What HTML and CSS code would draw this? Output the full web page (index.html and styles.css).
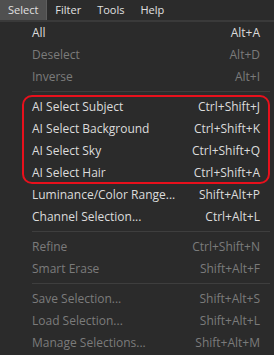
FILE: index.html
```html
<!DOCTYPE html>
<html lang="en">
<head>
  <meta charset="UTF-8" />
  <title>Select Menu</title>
  <link rel="stylesheet" href="styles.css">
</head>
<body>

  <!-- Menu bar -->
  <nav class="menubar">
    <a class="active">Select</a>
    <a>Filter</a>
    <a>Tools</a>
    <a>Help</a>
  </nav>

  <!-- Dropdown -->
  <div class="dropdown">
    <div class="item"><span>All</span><span>Alt+A</span></div>
    <div class="item disabled"><span>Deselect</span><span>Alt+D</span></div>
    <div class="item disabled"><span>Inverse</span><span>Alt+I</span></div>
    <div class="sep"></div>

    <div class="group highlight">
      <div class="item"><span>AI Select Subject</span><span>Ctrl+Shift+J</span></div>
      <div class="item"><span>AI Select Background</span><span>Ctrl+Shift+K</span></div>
      <div class="item"><span>AI Select Sky</span><span>Ctrl+Shift+Q</span></div>
      <div class="item"><span>AI Select Hair</span><span>Ctrl+Shift+A</span></div>
    </div>

    <div class="item"><span>Luminance/Color Range...</span><span>Shift+Alt+P</span></div>
    <div class="item"><span>Channel Selection...</span><span>Ctrl+Alt+L</span></div>
    <div class="sep"></div>
    <div class="item disabled"><span>Refine</span><span>Ctrl+Shift+N</span></div>
    <div class="item disabled"><span>Smart Erase</span><span>Shift+Alt+F</span></div>
    <div class="sep"></div>
    <div class="item disabled"><span>Save Selection...</span><span>Shift+Alt+S</span></div>
    <div class="item disabled"><span>Load Selection...</span><span>Shift+Alt+L</span></div>
    <div class="item disabled"><span>Manage Selections...</span><span>Shift+Alt+M</span></div>
  </div>

</body>
</html>
```

FILE: styles.css
```css
/* General */
body {
  margin: 0;
  background: #2b2b2b;
  font-family: "Open Sans", "Noto Sans", sans-serif;
  font-size: 12px;
  color: #dcdcdc;
}

/* Menu bar */
.menubar {
  display: flex;
  height: 20px;
  background: #2b2b2b;
  border-bottom: 2px solid #3a3a3a;
  font-size: 11px;
}

.menubar a {
  padding: 0 8px;
  line-height: 20px;
  color: #e0e0e0;
}

.menubar a.active {
  padding-right: 8px;
  background: #505050;
  border-right: 1px solid #5e5e5e;
}

/* Dropdown */
.dropdown {
  padding: 0 14px 0 32px;
}

.item {
  display: flex;
  justify-content: space-between;
  height: 22px;
  line-height: 22px;
}

.item.disabled {
  color: #7b7b7b;
}

.sep {
  height: 1px;
  margin: 3px -10px 4px 0;
  background: #3e3e3e;
}

/* Red annotation around AI group */
.group {
  position: relative;
}

.highlight::after {
  content: "";
  position: absolute;
  top: -1px;
  bottom: 0;
  left: -10px;
  right: -10px;
  border: 2px solid #e8101c;
  border-radius: 10px;
}
```
